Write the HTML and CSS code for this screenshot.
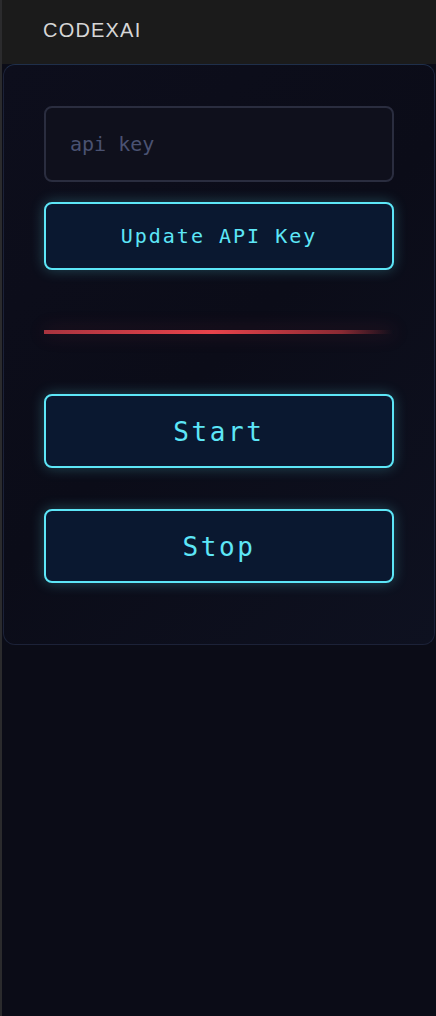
FILE: index.html
```html
<!DOCTYPE html>
<html lang="en">
<head>
<meta charset="utf-8">
<title>CodexAI</title>
<link rel="stylesheet" href="styles.css">
</head>
<body>
<div class="app">
  <header class="topbar">
    <span class="brand">CODEXAI</span>
  </header>
  <main class="main">
    <section class="panel">
      <input class="key-input" type="text" placeholder="api key">
      <button class="neon-btn neon-btn--small">Update API Key</button>
      <div class="divider"></div>
      <button class="neon-btn neon-btn--large">Start</button>
      <button class="neon-btn neon-btn--large neon-btn--last">Stop</button>
    </section>
  </main>
</div>
</body>
</html>
```

FILE: styles.css
```css
* { box-sizing: border-box; }

html, body {
  margin: 0;
  padding: 0;
  height: 100%;
}

body {
  background: #0b0c17;
  font-family: "Liberation Sans", Arial, sans-serif;
}

.app {
  min-height: 100vh;
  border-left: 2px solid #2b2b2d;
  display: flex;
  flex-direction: column;
}

.topbar {
  height: 64px;
  background: #1b1b1b;
  display: flex;
  align-items: center;
  padding-left: 41px;
  padding-bottom: 4px;
}

.brand {
  color: #d6d6d6;
  font-size: 20px;
  letter-spacing: 1.2px;
}

.main {
  flex: 1;
  padding: 0 1px 0 1px;
}

.panel {
  border: 1px solid #1c2238;
  border-top-color: #1f2f4a;
  border-radius: 12px;
  background: linear-gradient(135deg, #0d0e1c 0%, #0b0c18 50%, #0e1120 100%);
  padding: 41px 40px 40px 40px;
  display: flex;
  flex-direction: column;
}

.key-input {
  height: 76px;
  width: 100%;
  border: 2px solid #2a2d3f;
  border-radius: 8px;
  background: #0f101c;
  padding: 0 24px;
  font-family: "DejaVu Sans Mono", monospace;
  font-size: 20px;
  color: #c8cde0;
  outline: none;
  margin-bottom: 20px;
}

.key-input::placeholder {
  color: #4a5272;
}

.neon-btn {
  width: 100%;
  border: 2px solid #5de6f7;
  border-radius: 8px;
  background: #0a1830;
  color: #5de6f7;
  font-family: "DejaVu Sans Mono", monospace;
  letter-spacing: 0.1em;
  box-shadow: 0 0 14px rgba(93, 230, 247, 0.28);
  cursor: pointer;
  padding: 0;
}

.neon-btn--small {
  height: 68px;
  font-size: 20px;
}

.neon-btn--large {
  height: 74px;
  font-size: 26px;
  padding-top: 2px;
  margin-bottom: 41px;
}

.neon-btn--last {
  margin-bottom: 21px;
}

.divider {
  height: 4px;
  margin: 60px 0 60px 0;
  width: 100%;
  background: linear-gradient(90deg, #a8343f 0%, #e8434b 48%, #8a2a33 85%, rgba(60, 20, 30, 0) 100%);
  box-shadow: 0 0 18px rgba(232, 67, 75, 0.25);
}
```
